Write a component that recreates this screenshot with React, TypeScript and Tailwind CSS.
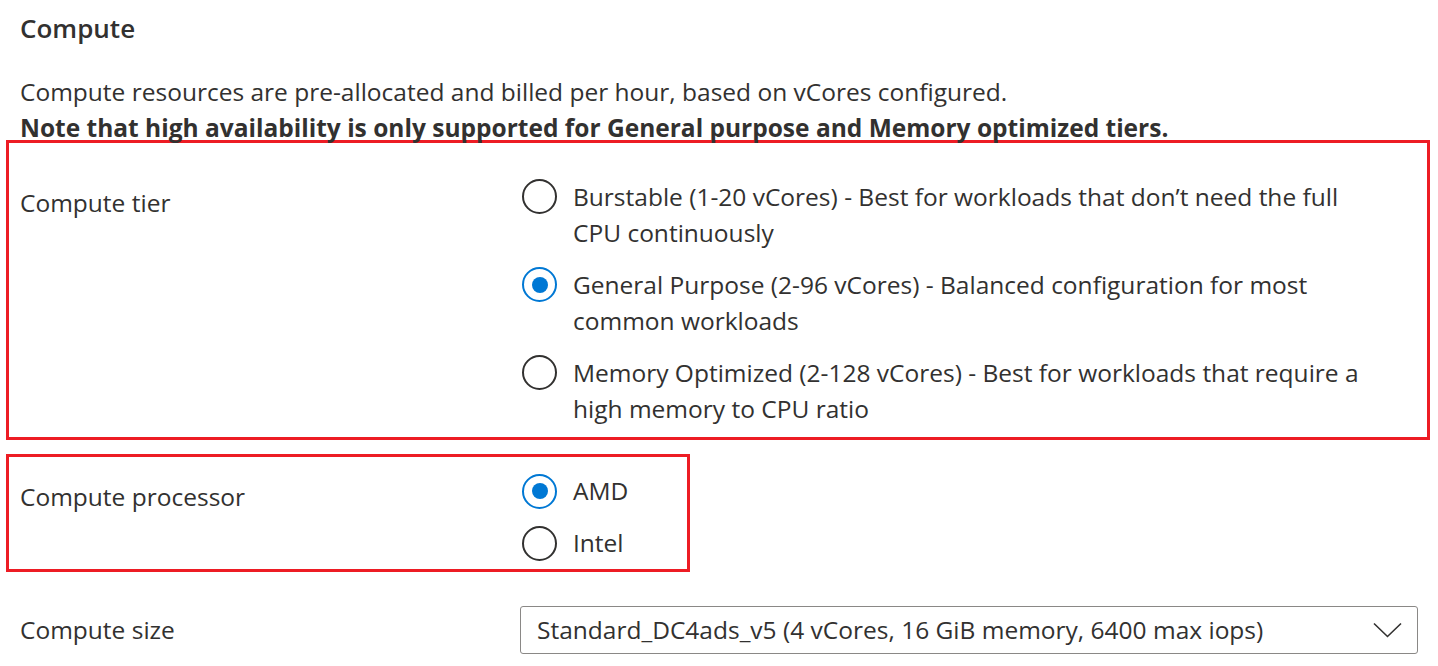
import { useState } from "react";

const tiers = [
  {
    id: "burstable",
    text: "Burstable (1-20 vCores) - Best for workloads that don\u2019t need the full CPU continuously",
  },
  {
    id: "general",
    text: "General Purpose (2-96 vCores) - Balanced configuration for most common workloads",
  },
  {
    id: "memory",
    text: "Memory Optimized (2-128 vCores) - Best for workloads that require a high memory to CPU ratio",
  },
];

function Radio({ checked }: { checked: boolean }) {
  return (
    <span
      className={
        checked
          ? "flex h-[35px] w-[35px] shrink-0 items-center justify-center rounded-full border-2 border-[#0078d4]"
          : "flex h-[35px] w-[35px] shrink-0 items-center justify-center rounded-full border-2 border-[#323130]"
      }
    >
      {checked && <span className="h-[16px] w-[16px] rounded-full bg-[#0078d4]" />}
    </span>
  );
}

export default function App() {
  const [tier, setTier] = useState("general");
  const [cpu, setCpu] = useState("amd");

  return (
    <div
      className="min-h-screen bg-white px-[6px] text-[24.5px] leading-[36px] text-[#323130]"
      style={{ fontFamily: '"Segoe UI", "Open Sans", sans-serif' }}
    >
      <div className="pl-[14px] pt-[10px] text-[26px] font-semibold">Compute</div>
      <div className="pl-[14px] pt-[28px]">
        <p>Compute resources are pre-allocated and billed per hour, based on vCores configured.</p>
        <p className="font-bold">
          Note that high availability is only supported for General purpose and Memory optimized tiers.
        </p>
      </div>

      <div className="mt-[-6px] flex w-[1424px] border-[3px] border-[#ed1c24] pb-[10px] pl-[11px] pt-[36px]">
        <div className="w-[502px] shrink-0 pt-[6px]">Compute tier</div>
        <div className="flex flex-col gap-[16px]">
          {tiers.map((t) => (
            <button
              key={t.id}
              onClick={() => setTier(t.id)}
              className="flex items-start gap-[16px] text-left"
            >
              <Radio checked={tier === t.id} />
              <span className="w-[815px]">{t.text}</span>
            </button>
          ))}
        </div>
      </div>

      <div className="mt-[14px] flex w-[684px] border-[3px] border-[#ed1c24] pb-[8px] pl-[11px] pt-[16px]">
        <div className="w-[502px] shrink-0 pt-[6px]">Compute processor</div>
        <div className="flex flex-col gap-[16px]">
          {[
            { id: "amd", label: "AMD" },
            { id: "intel", label: "Intel" },
          ].map((c) => (
            <button
              key={c.id}
              onClick={() => setCpu(c.id)}
              className="flex items-center gap-[16px] text-left"
            >
              <Radio checked={cpu === c.id} />
              <span>{c.label}</span>
            </button>
          ))}
        </div>
      </div>

      <div className="mt-[34px] flex items-center pl-[14px]">
        <div className="w-[500px] shrink-0">Compute size</div>
        <div className="flex h-[48px] w-[898px] items-center justify-between rounded-[3px] border border-[#8a8886] pl-[16px] pr-[15px]">
          <span>Standard_DC4ads_v5 (4 vCores, 16 GiB memory, 6400 max iops)</span>
          <svg width="29" height="16" viewBox="0 0 29 16" fill="none">
            <path d="M1 1.5 L14.5 14.5 L28 1.5" stroke="#323130" strokeWidth="1.6" />
          </svg>
        </div>
      </div>
    </div>
  );
}
